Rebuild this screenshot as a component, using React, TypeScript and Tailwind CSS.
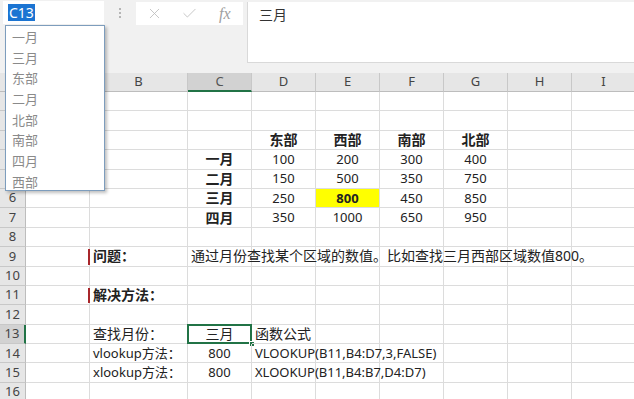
import { X, Check } from 'lucide-react';

type Cell = {
  t: string;
  align?: 'l' | 'c';
  bold?: boolean;
  fill?: boolean;
  bar?: boolean;
  sel?: boolean;
  big?: boolean;
};

const cols = ['A', 'B', 'C', 'D', 'E', 'F', 'G', 'H', 'I'];

const rows: Record<number, Record<string, Cell>> = {
  3: {
    D: { t: '东部', align: 'c', bold: true, big: true },
    E: { t: '西部', align: 'c', bold: true, big: true },
    F: { t: '南部', align: 'c', bold: true, big: true },
    G: { t: '北部', align: 'c', bold: true, big: true },
  },
  4: {
    C: { t: '一月', align: 'c', bold: true, big: true },
    D: { t: '100', align: 'c' },
    E: { t: '200', align: 'c' },
    F: { t: '300', align: 'c' },
    G: { t: '400', align: 'c' },
  },
  5: {
    C: { t: '二月', align: 'c', bold: true, big: true },
    D: { t: '150', align: 'c' },
    E: { t: '500', align: 'c' },
    F: { t: '350', align: 'c' },
    G: { t: '750', align: 'c' },
  },
  6: {
    C: { t: '三月', align: 'c', bold: true, big: true },
    D: { t: '250', align: 'c' },
    E: { t: '800', align: 'c', bold: true, fill: true },
    F: { t: '450', align: 'c' },
    G: { t: '850', align: 'c' },
  },
  7: {
    C: { t: '四月', align: 'c', bold: true, big: true },
    D: { t: '350', align: 'c' },
    E: { t: '1000', align: 'c' },
    F: { t: '650', align: 'c' },
    G: { t: '950', align: 'c' },
  },
  9: {
    B: { t: '问题：', bold: true, bar: true, big: true },
    C: { t: '通过月份查找某个区域的数值。比如查找三月西部区域数值800。', big: true },
  },
  11: {
    B: { t: '解决方法：', bold: true, bar: true, big: true },
  },
  13: {
    B: { t: '查找月份：', big: true },
    C: { t: '三月', align: 'c', sel: true, big: true },
    D: { t: '函数公式', big: true },
  },
  14: {
    B: { t: 'vlookup方法：' },
    C: { t: '800', align: 'c' },
    D: { t: 'VLOOKUP(B11,B4:D7,3,FALSE)' },
  },
  15: {
    B: { t: 'xlookup方法：' },
    C: { t: '800', align: 'c' },
    D: { t: 'XLOOKUP(B11,B4:B7,D4:D7)' },
  },
};

const suggestions = ['一月', '三月', '东部', '二月', '北部', '南部', '四月', '西部'];

const font = { fontFamily: '"Noto Sans", "Noto Sans CJK SC", sans-serif' };

function GridCell({ cell }: { cell?: Cell }) {
  const base = 'relative flex items-center border-r border-b border-[#dcdcdc] h-full text-[#222] whitespace-nowrap';
  if (!cell) return <div className={base} />;
  return (
    <div
      className={`${base} ${cell.big ? 'text-[14px]' : 'text-[13px]'} ${cell.align === 'c' ? 'justify-center' : 'justify-start'} ${cell.fill ? 'bg-[#ffff00]' : ''} ${cell.bold ? 'font-bold' : ''} ${cell.t.length > 8 ? 'z-10' : ''}`}
    >
      {cell.bar && <span className="absolute left-[-2px] top-[2px] bottom-[1px] w-[2px] bg-[#a8262b]" />}
      <span className={`leading-none ${cell.align === 'c' ? '' : 'absolute left-[3px]'}`}>{cell.t}</span>
      {cell.sel && (
        <>
          <span className="absolute inset-[-1px] border-2 border-[#217346]" />
          <span className="absolute right-[-4px] bottom-[-4px] w-[6px] h-[6px] bg-[#217346] border border-white" />
        </>
      )}
    </div>
  );
}

export default function App() {
  return (
    <div className="relative w-[634px] h-[399px] overflow-hidden bg-white select-none" style={font}>
      {/* formula bar */}
      <div className="flex items-start h-[73px] bg-[#f1f1f1] pt-[1px]">
        <div className="ml-[3px] w-[101px] h-[23px] bg-white flex items-center pl-[5px]">
          <span className="bg-[#1b74d2] text-white text-[14px] leading-[17px] px-[1px]">C13</span>
        </div>
        <div className="w-[32px] h-[23px] flex items-center justify-center">
          <span className="flex flex-col gap-[2px]">
            <span className="w-[2px] h-[2px] bg-[#b5b5b5]" />
            <span className="w-[2px] h-[2px] bg-[#b5b5b5]" />
            <span className="w-[2px] h-[2px] bg-[#b5b5b5]" />
          </span>
        </div>
        <div className="mt-[1px] w-[107px] h-[23px] bg-white flex items-center pl-[10px] text-[#bdbdbd]">
          <X size={17} strokeWidth={1.2} />
          <Check size={17} strokeWidth={1.2} className="ml-[18px]" />
          <span
            className="ml-[21px] italic text-[16px] text-[#a0a0a0] leading-none"
            style={{ fontFamily: '"Liberation Serif", serif' }}
          >
            fx
          </span>
        </div>
        <div className="ml-[4px] mt-[1px] flex-1 h-[61px] bg-white border-l border-b border-[#d9d9d9] pl-[11px] pt-[2px] text-[14px] text-[#333]">
          三月
        </div>
      </div>

      {/* sheet */}
      <div className="grid grid-cols-[26px_64px_98px_64px_64px_64px_64px_64px_64px_64px] grid-rows-[19px_repeat(16,19.4px)]">
        <div className="bg-[#e6e6e6] border-r border-b border-[#bdbdbd]" />
        {cols.map((c) => (
          <div
            key={c}
            className={`flex items-center justify-center text-[13px] border-r border-[#c8c8c8] ${
              c === 'C'
                ? 'bg-[#d2d2d2] text-[#555] border-b-2 border-b-[#217346]'
                : 'bg-[#e6e6e6] text-[#444] border-b border-b-[#bdbdbd]'
            }`}
          >
            {c}
          </div>
        ))}
        {Array.from({ length: 16 }, (_, i) => i + 1).map((r) => (
          <div key={r} className="contents">
            <div
              className={`flex items-center justify-center text-[13px] text-[#444] border-b border-[#c8c8c8] ${
                r === 13 ? 'bg-[#d2d2d2] border-r-2 border-r-[#217346]' : 'bg-[#e6e6e6] border-r border-r-[#bdbdbd]'
              }`}
            >
              {r}
            </div>
            {cols.map((c) => (
              <GridCell key={c} cell={rows[r]?.[c]} />
            ))}
          </div>
        ))}
      </div>

      {/* autocomplete list */}
      <div className="absolute left-[5px] top-[25px] w-[100px] h-[166px] bg-white border border-[#7d9dbd] shadow-[2px_2px_3px_rgba(0,0,0,0.25)] pt-[1px] pl-[6px]">
        {suggestions.map((s) => (
          <div key={s} className="h-[20.7px] flex items-center text-[13px] leading-none text-[#8a8a8a]">
            {s}
          </div>
        ))}
      </div>
    </div>
  );
}
